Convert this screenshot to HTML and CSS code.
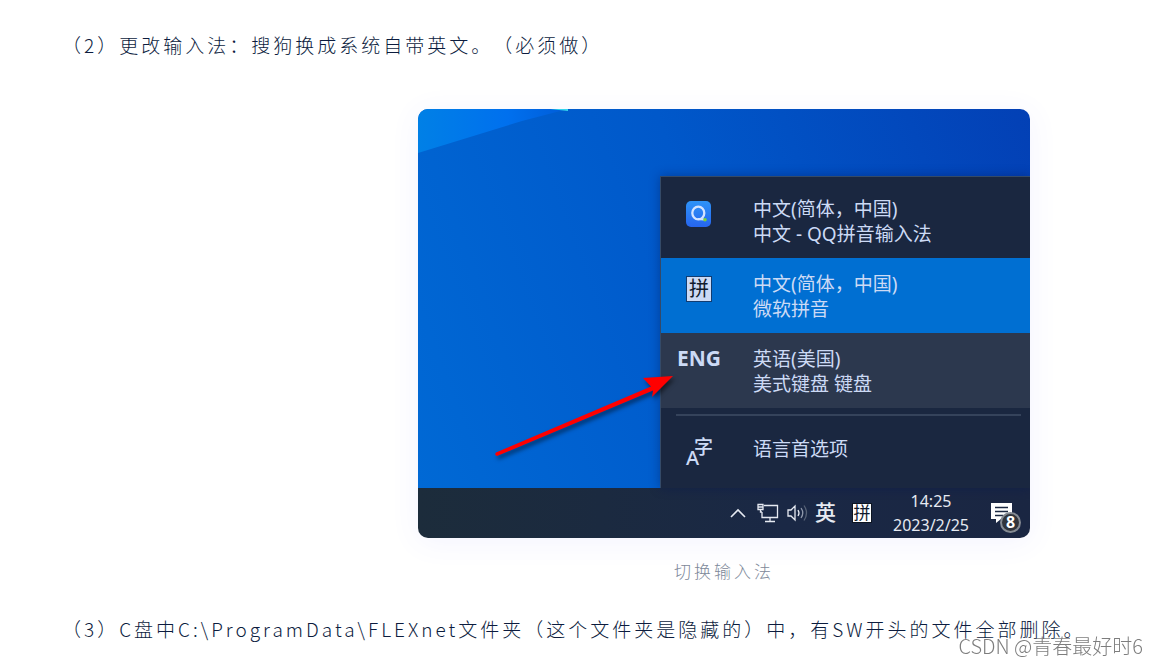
FILE: index.html
```html
<!DOCTYPE html>
<html lang="zh-CN">
<head>
  <meta charset="UTF-8">
  <title>切换输入法</title>
  <link rel="stylesheet" href="styles.css">
</head>
<body>
  <article class="post">
    <p>（2）更改输入法：搜狗换成系统自带英文。（必须做）</p>

    <figure class="shot">
      <div class="desktop">
        <!-- 壁纸 + 输入法菜单 -->
        <div class="wallpaper">
          <svg class="beam" width="170" height="46" viewBox="0 0 170 46" aria-hidden="true">
            <defs>
              <linearGradient id="beamFill" x1="0" y1="0" x2="1" y2="0">
                <stop offset="0" stop-color="#0080e6"/>
                <stop offset="0.6" stop-color="#0070ee"/>
                <stop offset="1" stop-color="#005cd8"/>
              </linearGradient>
            </defs>
            <path d="M0 0H150L104 12L0 44Z" fill="url(#beamFill)"/>
            <path d="M132 0H150V2Z" fill="#35d4ee"/>
          </svg>

          <ul class="menu">
            <li class="first">
              <button type="button">
                <span class="icon">
                  <svg width="26" height="26" viewBox="0 0 26 26" aria-hidden="true">
                    <defs>
                      <linearGradient id="qqFill" x1="0" y1="0" x2="0" y2="1">
                        <stop offset="0" stop-color="#2e93f8"/>
                        <stop offset="1" stop-color="#2665ee"/>
                      </linearGradient>
                    </defs>
                    <rect width="25" height="26" rx="5" fill="url(#qqFill)"/>
                    <ellipse cx="12.3" cy="12" rx="6" ry="6.4" fill="none" stroke="#d3e3ff" stroke-width="2.3"/>
                    <path d="M12 18L18 18.6" stroke="#d3e3ff" stroke-width="2"/>
                    <circle cx="19" cy="18.8" r="1.8" fill="#78d43c"/>
                  </svg>
                </span>
                <span>中文(简体，中国)<br>中文 - QQ拼音输入法</span>
              </button>
            </li>
            <li class="active">
              <button type="button">
                <span class="icon"><span class="pin">拼</span></span>
                <span>中文(简体，中国)<br>微软拼音</span>
              </button>
            </li>
            <li class="hover">
              <button type="button">
                <span class="icon eng">ENG</span>
                <span>英语(美国)<br>美式键盘 键盘</span>
              </button>
            </li>
            <li class="prefs">
              <button type="button">
                <span class="icon">
                  <svg class="lang" width="28" height="32" viewBox="0 0 28 32" aria-hidden="true">
                    <text x="1" y="28" font-size="20">A</text>
                    <text x="9" y="17" font-size="19">字</text>
                  </svg>
                </span>
                <span>语言首选项</span>
              </button>
            </li>
          </ul>
        </div>

        <!-- 任务栏 -->
        <div class="taskbar">
          <button type="button" aria-label="显示隐藏的图标">
            <svg width="16" height="12" viewBox="0 0 16 12"><path d="M1 10L8 3L15 10" fill="none" stroke="#e6eaf2" stroke-width="1.6"/></svg>
          </button>
          <button type="button" class="net" aria-label="网络">
            <svg width="22" height="20" viewBox="0 0 22 20" fill="none" stroke="#e6eaf2" stroke-width="1.3">
              <path d="M7 2.5H20.5V14.5H5V9M13 14.5V18M8 18.5H18"/>
              <path d="M1 1.5H6V6.5H1ZM1 4H6M3.500 6.500V9H5"/>
            </svg>
          </button>
          <button type="button" class="vol" aria-label="音量">
            <svg width="22" height="20" viewBox="0 0 22 20" fill="none" stroke="#e6eaf2" stroke-width="1.3">
              <path d="M1 7H4L8 3V17L4 13H1Z"/>
              <path d="M11 7Q13 10 11 13"/>
              <path d="M14 5Q17.500 10 14 15" stroke="#8f99ab"/>
              <path d="M17 2.500Q22 10 17 17.500" stroke="#566276"/>
            </svg>
          </button>
          <button type="button" class="mode">英</button>
          <button type="button" class="pin small">拼</button>
          <button type="button" class="clock">14:25<br>2023/2/25</button>
          <button type="button" class="notice" aria-label="通知">
            <svg width="22" height="21" viewBox="0 0 22 21">
              <path d="M0 0H21V16H10L5 20V16H0Z" fill="#fff"/>
              <path d="M4 4.500H17M4 8.500H17M4 12.500H12" stroke="#1b2842" stroke-width="1.5"/>
            </svg>
            <span class="badge">8</span>
          </button>
        </div>

        <!-- 红色箭头 -->
        <svg class="arrow" width="184" height="88" viewBox="0 0 184 88" aria-hidden="true">
          <path d="M3 80.500L158 14.500L150 6L180 4L159 25L160 18.500L4 84Q1 83 3 80.500Z" fill="#f00"/>
        </svg>
      </div>
      <figcaption>切换输入法</figcaption>
    </figure>

    <p>（3）C盘中C:\ProgramData\FLEXnet文件夹（这个文件夹是隐藏的）中，有SW开头的文件全部删除。</p>
  </article>
  <div class="watermark">CSDN @青春最好时6</div>
</body>
</html>
```

FILE: styles.css
```css
* {
  box-sizing: border-box;
}
body {
  margin: 0;
  background-color: #fff;
  color: #0c1c3e;
  font-family: "Noto Sans", "Noto Sans CJK SC", sans-serif;
  overflow: hidden;
}
button {
  border: none;
  padding: 0;
  background: none;
  color: inherit;
  font: inherit;
  text-align: left;
  cursor: pointer;
}
svg {
  display: block;
}
.post {
  padding: 29px 0 0 62px;
}
.post p {
  margin: 0;
  font-family: "Noto Sans CJK SC", sans-serif;
  font-size: 19px;
  font-weight: 300;
  line-height: 32px;
  letter-spacing: 3px;
  text-spacing-trim: space-all;
  white-space: nowrap;
}

/* 截图 */
.shot {
  display: flex;
  flex-direction: column;
  align-items: center;
  margin: 48px 0 28px 228px;
}
.desktop {
  position: relative;
  width: 100%;
  max-width: 612px;
  border-radius: 10px;
  overflow: hidden;
  box-shadow: 0 4px 30px rgba(80, 80, 255, 0.07);
}
.wallpaper {
  display: flex;
  justify-content: flex-end;
  padding-top: 67px;
  background: linear-gradient(70deg, #0069d5 0%, #0058ca 50%, #0340b5 100%);
}
.beam {
  position: absolute;
  top: 0;
  left: 0;
}
figcaption {
  margin-top: 19px;
  color: #7d8899;
  font-family: "Noto Sans CJK SC", sans-serif;
  font-size: 17px;
  font-weight: 300;
  line-height: 28px;
  letter-spacing: 3px;
}

/* 菜单 */
.menu {
  width: 370px;
  margin: 0;
  padding: 0;
  list-style: none;
  border: 1px solid #344a68;
  border-width: 1px 0 0 1px;
  background-color: #1a2740;
  box-shadow: 0 0 10px rgba(0, 20, 80, 0.4);
  color: #ccdaf5;
  font-size: 19px;
  line-height: 25px;
}
.menu button {
  display: flex;
  align-items: flex-start;
  width: 100%;
  padding: 14px 0 11px;
}
.menu .first button {
  padding-top: 20px;
}
.menu .active {
  background-color: #006fd2;
}
.menu .hover {
  background-color: #2c384e;
}
.menu .icon {
  display: flex;
  justify-content: center;
  flex: none;
  width: 76px;
  margin-right: 16px;
  padding-top: 4px;
}
.menu .eng {
  height: 25px;
  padding-top: 0;
  font-size: 21px;
  font-weight: 700;
  line-height: 22px;
}
.menu .prefs::before {
  content: "";
  display: block;
  height: 2px;
  margin: 6px 9px 0 15px;
  background-color: #35435b;
}
.menu .prefs button {
  padding: 21px 0 20px;
}
.menu .prefs .icon {
  height: 31px;
  padding-top: 0;
}
.lang {
  fill: #ccdaf5;
  font-weight: 500;
  overflow: visible;
}
.pin {
  width: 26px;
  height: 26px;
  border: 1px solid #123c70;
  background-color: #ccdaf5;
  color: #101a2c;
  font-size: 20px;
  line-height: 23px;
  text-align: center;
}

/* 任务栏 */
.taskbar {
  display: flex;
  align-items: center;
  justify-content: flex-end;
  height: 50px;
  padding-right: 17px;
  background: linear-gradient(90deg, #1c2c3b, #1a2845 60%, #1a2642);
  color: #e6eaf2;
}
.net {
  margin-left: 11px;
}
.vol {
  margin-left: 8px;
}
.mode {
  margin-left: 6px;
  font-size: 21px;
  font-weight: 500;
  line-height: 24px;
  padding-bottom: 3px;
}
.pin.small {
  width: 20px;
  height: 20px;
  margin-left: 16px;
  border-color: #0d1522;
  background-color: #fff;
  font-size: 17px;
  line-height: 16px;
}
.clock {
  margin-left: 21px;
  font-size: 16px;
  line-height: 24px;
  text-align: center;
}
.notice {
  position: relative;
  margin-left: 22px;
}
.badge {
  position: absolute;
  left: 9px;
  top: 9px;
  width: 21px;
  height: 21px;
  border: 2px solid #858b93;
  border-radius: 50%;
  background-color: #30343b;
  color: #fff;
  font-size: 16px;
  font-weight: 700;
  line-height: 16px;
  text-align: center;
}
.arrow {
  position: absolute;
  left: 75px;
  top: 263px;
  filter: drop-shadow(2px 3px 2px rgba(0, 0, 0, 0.5));
}

.watermark {
  position: fixed;
  right: 15px;
  bottom: 5px;
  color: rgba(70, 70, 70, 0.7);
  font-family: "Noto Sans CJK SC", sans-serif;
  font-size: 20px;
  font-weight: 300;
  line-height: 28px;
}
```
